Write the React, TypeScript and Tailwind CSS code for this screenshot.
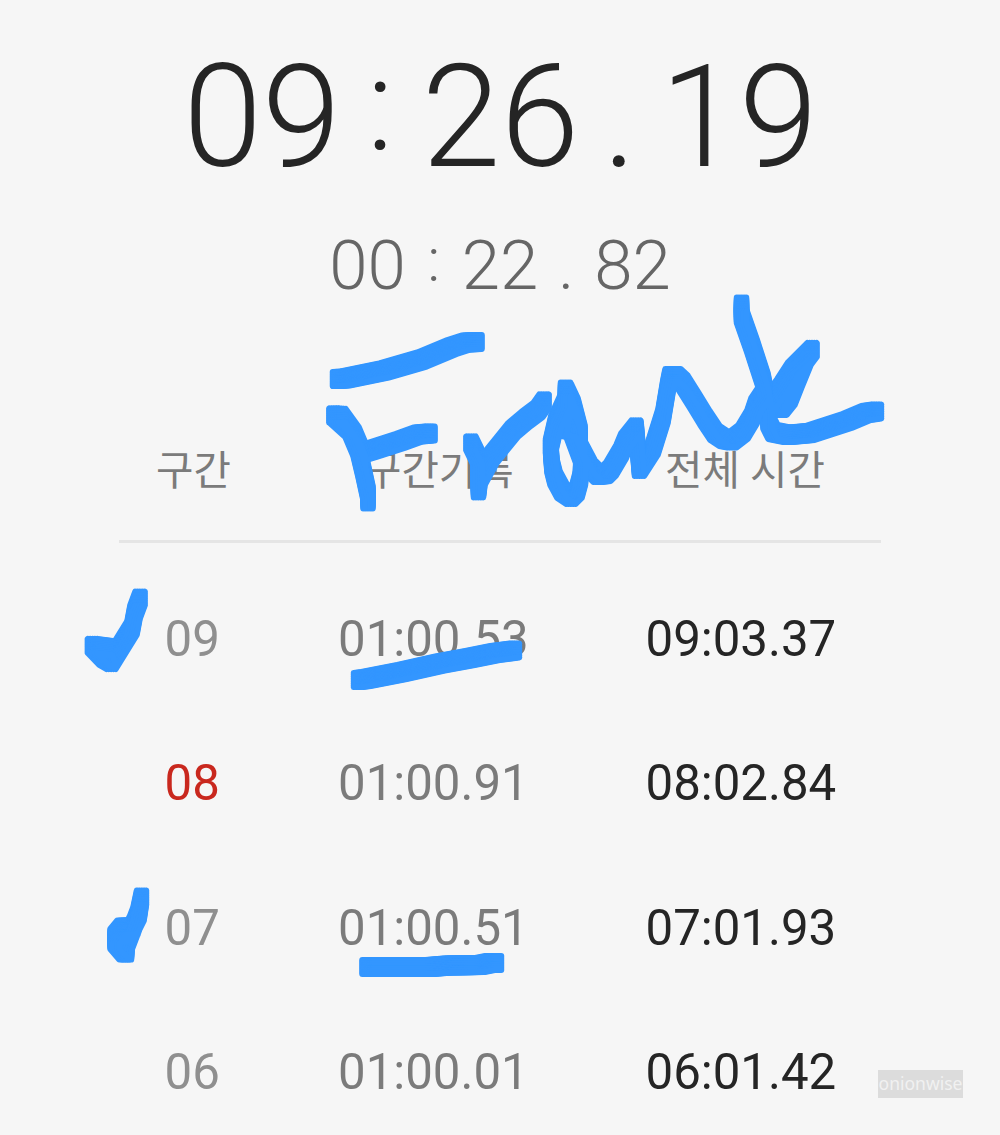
interface Lap {
  no: string;
  split: string;
  total: string;
  slowest?: boolean;
}

interface Point {
  x: number;
  y: number;
}

const laps: Lap[] = [
  { no: '09', split: '01:00.53', total: '09:03.37' },
  { no: '08', split: '01:00.91', total: '08:02.84', slowest: true },
  { no: '07', split: '01:00.51', total: '07:01.93' },
  { no: '06', split: '01:00.01', total: '06:01.42' },
];

// Centre lines of the marker strokes
const strokes: string[] = [
  // F
  'M337.5 379 L345 378.5 L384 370.5 L422 359.5 L452 347 L466 342.5 L477 342',
  'M334 415.5 L341 416 L350 430 L358 449 L363 470 L368 493 L368 501.5',
  'M334 415.5 L350 430 M341 416 L354 434 L362 453 M362 453 L372 450 L400 441 L418 434.5 L430 433.5',
  // r
  'M471 443.5 L478 458 L478.5 490.5 L480 478 L492 456 L513 430 L526 419 L538 410 L544 401.5',
  // a, n
  'M565.5 389.5 L565.5 401 L556 422 L550.5 446 L552 466 L555 478 L562 491 L571 497 L577 491 L580.5 478 L581 457 L571 430 L562 428 L566 400 L575 420 L580 448',
  'M566 390 L573 405 L580 432 L580 448 L590 467 L598 475 L606 474 L611 469 L621 452 L626 440 L636 427.5 L639.5 469 L653 448 L663 416 L668 386 L670 376 L676 376 L683 382.5 L694 400 L705 418 L715 433 L724 439 L732 440.5 L743 432 L752 417 L756 405 L764 393',
  // k
  'M741.5 304.5 L741.5 316 L752 346 L763 380 L768 405 L768 422 L773 432 L788 435 L810 433 L847 421 L866 413 L876.5 411.5',
  'M764 393 L768 405 L782 386 L793 369 L812 350 L806 358 L797 380 L790 398 L782 408 L775 408 L790 390 L800 365 L780 400',
  // ticks
  'M92.5 646 L104 658 L111 662 L108 648 L92.5 646 M111 662 L132 628 L135 612 L140 598.5',
  'M133 927.5 L122 927.5 L115 936 L115 942 L124 952.5 L126.5 952.5 L127 943 L138 914 L141.5 897.5 L139 914 L131 930 L120 935',
  // underlines
  'M358.5 680 L366 679 L402 672 L440 663.5 L470 658 L495 653 L514.5 650.5',
  'M367 967 L430 967 L448 965.5 L480 965 L490 963 L496.5 963',
];

// A 15x20 nib with rounded corners, swept along each stroke
const nib: Point[] = [-7, -5.25, -3.5, -1.75, 0, 1.75, 3.5, 5.25, 7].flatMap((y) =>
  [-4.75, -2.4, 0, 2.4, 4.75].map((x) => ({ x, y }))
);

const Marker = () => (
  <svg
    className="pointer-events-none absolute inset-0"
    width="1000"
    height="1135"
    viewBox="0 0 1000 1135"
    fill="none"
    stroke="#3396ff"
    strokeWidth="6"
    strokeLinecap="round"
    strokeLinejoin="round"
  >
    {nib.map(({ x, y }) => (
      <path key={`${x},${y}`} d={strokes.join(' ')} transform={`translate(${x} ${y})`} />
    ))}
  </svg>
);

const LapRow = ({ lap }: { lap: Lap }) => (
  <div className="grid h-[144.5px] grid-cols-[173.5px_307.5px_1fr] items-center pl-[45.5px] text-[49.2px]">
    <span className={lap.slowest ? 'text-[#c9281e]' : 'text-[#8f8f8f]'}>{lap.no}</span>
    <span className="text-[#7b7b7b]">{lap.split}</span>
    <span className="text-[#252525]">{lap.total}</span>
  </div>
);

const App = () => {
  return (
    <div className="relative h-[1135px] w-[1000px] overflow-hidden bg-[#f6f6f6] font-['Roboto','Noto_Sans_CJK_KR',sans-serif]">
      {/* Timers */}
      <div className="flex h-[171px] items-start justify-center pt-[33px] pl-px text-[142px] leading-[170px] font-light text-[#252525]">
        <span>09</span>
        <span className="w-[81px] -translate-x-px -translate-y-[13px] text-center text-[128px]">:</span>
        <span>26</span>
        <span className="w-[81px] text-center">.</span>
        <span>19</span>
      </div>
      <div className="mt-[54px] flex h-[82px] items-start justify-center text-[69px] leading-[82px] font-light text-[#666666]">
        <span>00</span>
        <span className="w-[56px] -translate-y-[6px] text-center text-[62px]">:</span>
        <span>22</span>
        <span className="w-[56px] text-center">.</span>
        <span>82</span>
      </div>

      {/* Lap table */}
      <div className="mx-[119px] mt-[124px]">
        <div className="grid h-[112px] grid-cols-[208px_300px_1fr] border-b-[3px] border-[#e5e5e5] pl-[37px] text-[40.7px] leading-[80px] text-[#7b7b7b]">
          <span>구간</span>
          <span>구간기록</span>
          <span className="pl-px">전체 시간</span>
        </div>
        <div className="pt-[24.5px]">
          {laps.map((lap) => (
            <LapRow key={lap.no} lap={lap} />
          ))}
        </div>
      </div>

      <Marker />

      <div className="absolute top-[1070px] left-[878px] h-[28px] w-[85px] bg-[#dcdcdc] text-center font-['Noto_Sans',sans-serif] text-[17.5px] leading-[27px] text-[#f1f1f1]">
        onionwise
      </div>
    </div>
  );
};

export default App;
